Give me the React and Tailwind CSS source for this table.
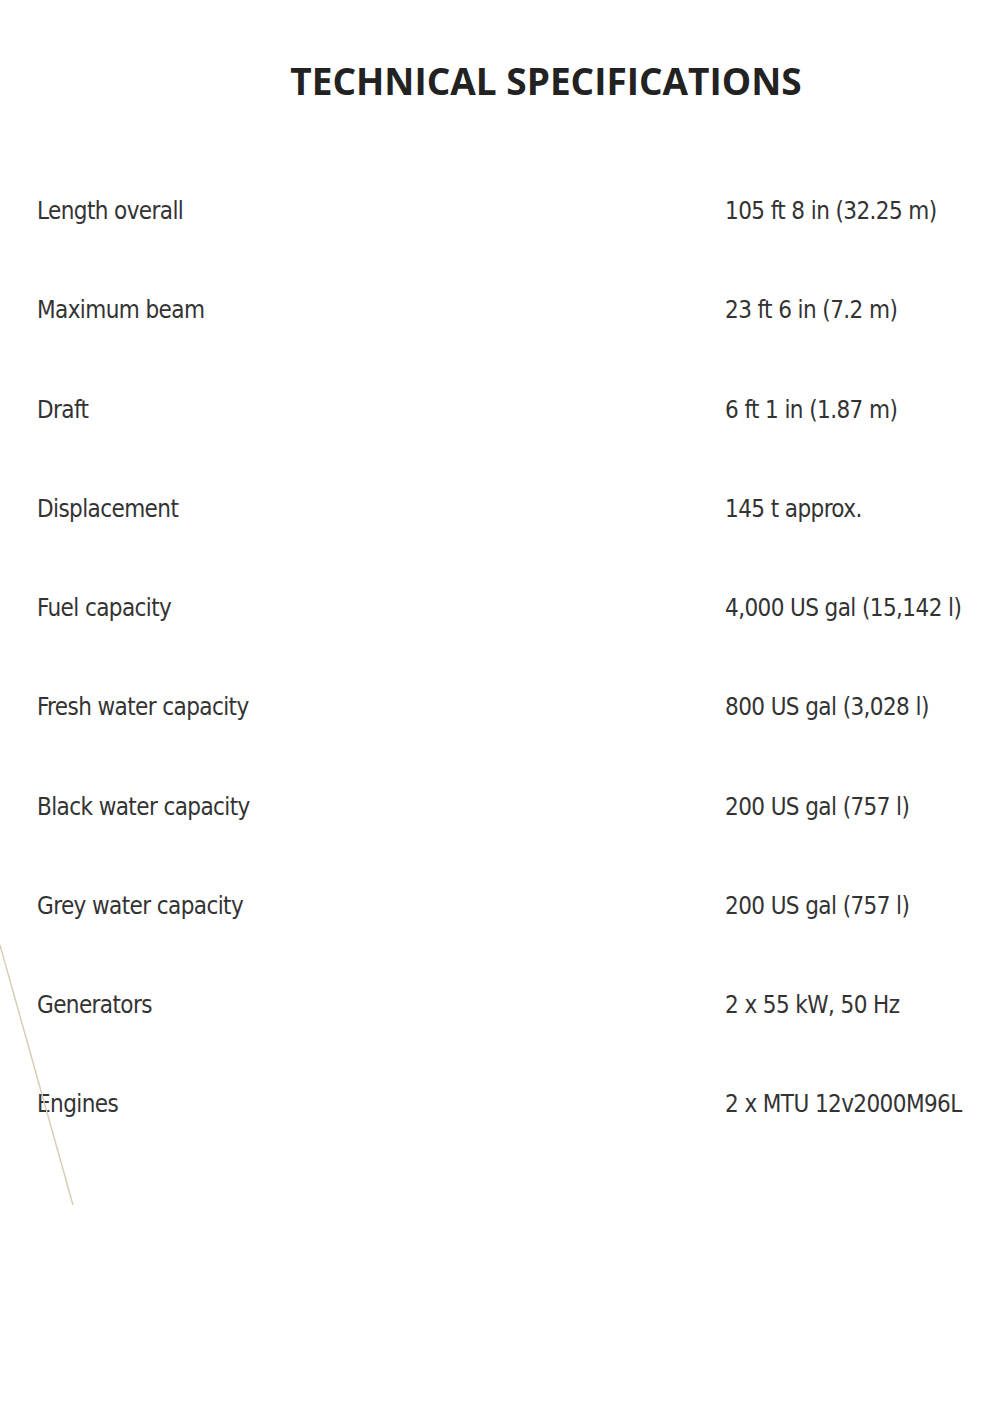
const rows = [
  ["Length overall", "105 ft 8 in (32.25 m)"],
  ["Maximum beam", "23 ft 6 in (7.2 m)"],
  ["Draft", "6 ft 1 in (1.87 m)"],
  ["Displacement", "145 t approx."],
  ["Fuel capacity", "4,000 US gal (15,142 l)"],
  ["Fresh water capacity", "800 US gal (3,028 l)"],
  ["Black water capacity", "200 US gal (757 l)"],
  ["Grey water capacity", "200 US gal (757 l)"],
  ["Generators", "2 x 55 kW, 50 Hz"],
  ["Engines", "2 x MTU 12v2000M96L"],
];

export default function App() {
  return (
    <div className="relative w-[1000px] h-[1416px] bg-white overflow-hidden">
      <svg className="absolute left-0 top-0 pointer-events-none" width="1000" height="1416">
        <line x1="0" y1="945" x2="73" y2="1205" stroke="#d8cdb8" strokeWidth="1.5" />
      </svg>
      <h1 className="pt-[57px] pl-[92px] text-center text-[37px] leading-[48px] font-bold text-[#222] [font-family:'Open_Sans',sans-serif]">
        TECHNICAL SPECIFICATIONS
      </h1>
      <div className="mt-[88px] pl-[37px] flex flex-col gap-[63.25px] text-[#333] text-[24px] leading-[36px] tracking-[-0.6px] [font-family:'DejaVu_Sans_Condensed','Liberation_Sans_Narrow',sans-serif]">
        {rows.map(([k, v]) => (
          <div key={k} className="grid grid-cols-[688px_1fr]">
            <div>{k}</div>
            <div>{v}</div>
          </div>
        ))}
      </div>
    </div>
  );
}
